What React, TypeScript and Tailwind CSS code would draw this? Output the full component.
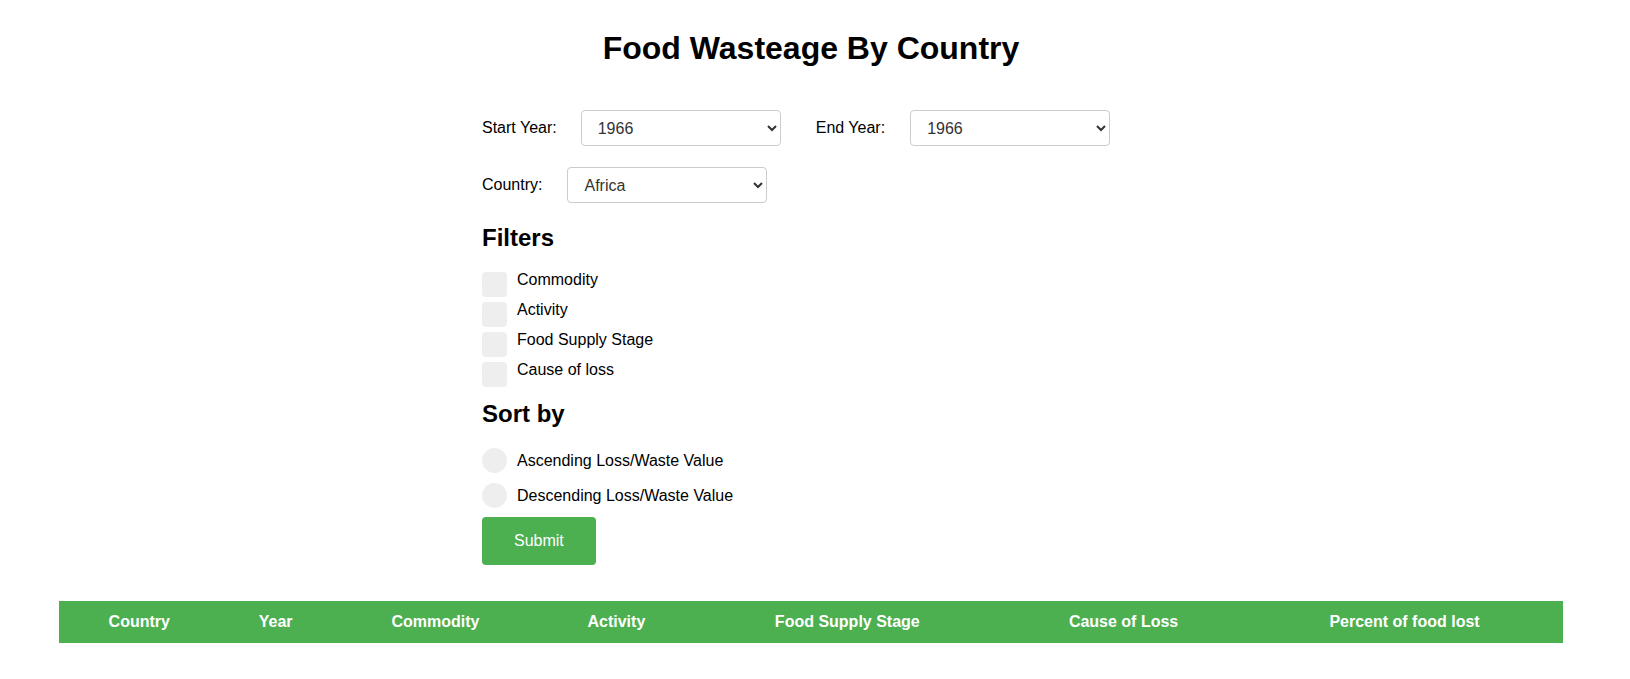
import { useState } from 'react';

const years = ['1966', '1967', '1968', '1969', '1970'];
const countries = ['Africa', 'Asia', 'Europe'];
const filters = ['Commodity', 'Activity', 'Food Supply Stage', 'Cause of loss'];
const sorts = ['Ascending Loss/Waste Value', 'Descending Loss/Waste Value'];
const columns = ['Country', 'Year', 'Commodity', 'Activity', 'Food Supply Stage', 'Cause of Loss', 'Percent of food lost'];

function Select({ value, options, onChange }: { value: string; options: string[]; onChange: (v: string) => void }) {
  return (
    <select
      value={value}
      onChange={e => onChange(e.target.value)}
      className="h-[36px] w-[200px] rounded border border-[#ccc] bg-white px-3 text-[16px] text-[#333]"
    >
      {options.map(o => (
        <option key={o}>{o}</option>
      ))}
    </select>
  );
}

export default function App() {
  const [start, setStart] = useState('1966');
  const [end, setEnd] = useState('1966');
  const [country, setCountry] = useState('Africa');
  const [checked, setChecked] = useState<string[]>([]);
  const [sort, setSort] = useState('');

  const toggle = (f: string) => {
    setChecked(c => (c.includes(f) ? c.filter(x => x !== f) : [...c, f]));
  };

  return (
    <div className="min-h-screen bg-white font-['Liberation_Sans',Arial,sans-serif] text-black">
      <h1 className="pr-[8px] pt-[30px] text-center text-[32px] font-bold leading-[37px]">Food Wasteage By Country</h1>

      <div className="mx-auto mt-[43px] w-[666px]">
        {/* Year range */}
        <div className="flex items-center">
          <label className="mr-[24px] text-[16px]">Start Year:</label>
          <Select value={start} options={years} onChange={setStart} />
          <label className="ml-[35px] mr-[25px] text-[16px]">End Year:</label>
          <Select value={end} options={years} onChange={setEnd} />
        </div>

        <div className="mt-[21px] flex items-center">
          <label className="mr-[25px] text-[16px]">Country:</label>
          <Select value={country} options={countries} onChange={setCountry} />
        </div>

        <h2 className="mt-[21px] text-[24px] font-bold leading-[28px]">Filters</h2>
        <div className="mt-[20px] flex flex-col gap-[5px]">
          {filters.map(f => (
            <label key={f} className="flex h-[25px] cursor-pointer items-start gap-[10px] text-[16px] leading-[18px]">
              <input type="checkbox" className="hidden" checked={checked.includes(f)} onChange={() => toggle(f)} />
              <span
                className={`h-[25px] w-[25px] shrink-0 rounded ${checked.includes(f) ? 'bg-[#4CAF50]' : 'bg-[#eee]'}`}
              />
              <span className="-mt-px">{f}</span>
            </label>
          ))}
        </div>

        <h2 className="mt-[13px] text-[24px] font-bold leading-[28px]">Sort by</h2>
        <div className="mt-[20px] flex flex-col gap-[10px]">
          {sorts.map(s => (
            <label key={s} className="flex h-[25px] cursor-pointer items-center gap-[10px] text-[16px] leading-[18px]">
              <input type="radio" name="sort" className="hidden" checked={sort === s} onChange={() => setSort(s)} />
              <span className={`h-[25px] w-[25px] shrink-0 rounded-full ${sort === s ? 'bg-[#4CAF50]' : 'bg-[#eee]'}`} />
              <span>{s}</span>
            </label>
          ))}
        </div>

        <button className="mt-[9px] rounded bg-[#4CAF50] px-[32px] py-[15px] text-[16px] leading-[18px] text-white">
          Submit
        </button>
      </div>

      <div className="mx-[59px] mt-[36px] w-[1504px]">
        <table className="w-full border-collapse">
          <thead>
            <tr className="bg-[#4CAF50]">
              {columns.map(c => (
                <th key={c} className="px-[15px] py-3 text-center text-[16px] font-bold leading-[18px] text-white">
                  {c}
                </th>
              ))}
            </tr>
          </thead>
          <tbody />
        </table>
      </div>
    </div>
  );
}
